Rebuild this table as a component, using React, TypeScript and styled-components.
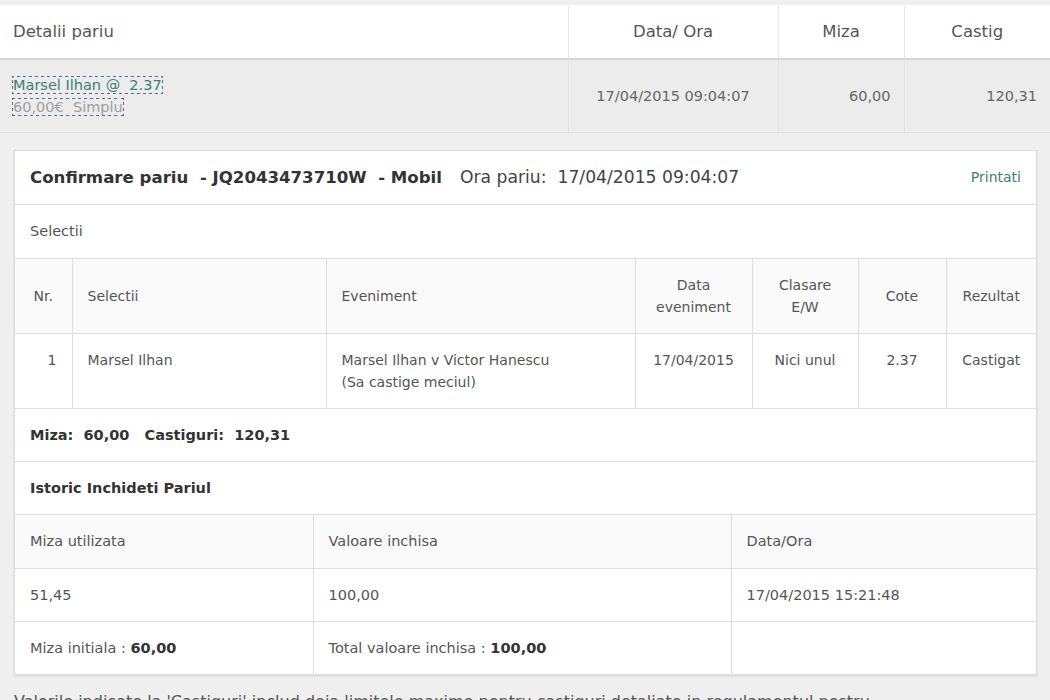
import React from "react"
import styled, { createGlobalStyle } from "styled-components"

const GlobalStyle = createGlobalStyle`
  html, body {
    margin: 0;
    padding: 0;
    background: #efefef;
    font-family: "DejaVu Sans", Verdana, sans-serif;
    color: #555;
  }
  * { box-sizing: border-box; }
`

const Page = styled.div`
  width: 1050px;
  height: 700px;
  overflow: hidden;
  padding-top: 5px;
`

const BetTable = styled.table`
  width: 1050px;
  border-collapse: collapse;
  table-layout: fixed;
`

const HeadCell = styled.th<{ $align?: string }>`
  height: 54px;
  background: #fff;
  font-weight: normal;
  font-size: 16.5px;
  color: #555;
  text-align: ${(p) => p.$align || "center"};
  padding: 0 13px;
  border-bottom: 2px solid #d6d6d6;
  border-left: 1px solid #e6e6e6;
  &:first-child { border-left: none; }
`

const BodyCell = styled.td<{ $align?: string }>`
  height: 73px;
  background: #ececec;
  font-size: 14.5px;
  color: #666;
  text-align: ${(p) => p.$align || "center"};
  padding: 0 13px;
  border-left: 1px solid #e2e2e2;
  border-bottom: 1px solid #e2e2e2;
  &:first-child { border-left: none; }
`

const BetLink = styled.a`
  display: inline;
  outline: 1px dotted #5a6a8a;
  line-height: 22px;
  font-size: 14.5px;
  text-decoration: none;
  white-space: pre;
`

const Odds = styled.span`
  color: #3e8070;
`

const Stake = styled.span`
  color: #a0a0a0;
`

const Content = styled.div`
  padding: 17px 13px 0 14px;
`

const Card = styled.div`
  background: #fff;
  border: 1px solid #dcdcdc;
  box-shadow: 0 1px 2px rgba(0, 0, 0, 0.12);
`

const Row = styled.div<{ $bold?: boolean; $h?: number }>`
  display: flex;
  align-items: center;
  height: ${(p) => p.$h || 53}px;
  padding: 0 15px;
  border-bottom: 1px solid #dedede;
  font-size: 14.5px;
  font-weight: ${(p) => (p.$bold ? "bold" : "normal")};
  color: ${(p) => (p.$bold ? "#333" : "#555")};
`

const Title = styled.span`
  font-size: 16.6px;
  font-weight: bold;
  color: #333;
  white-space: pre;
`

const TitleTime = styled.span`
  font-size: 17.2px;
  color: #444;
  margin-left: 18px;
  white-space: pre;
`

const PrintLink = styled.a`
  margin-left: auto;
  font-size: 14px;
  color: #3e8070;
  text-decoration: none;
`

const Spaced = styled.span`
  white-space: pre;
`

const Grid = styled.table`
  width: 100%;
  border-collapse: collapse;
  table-layout: fixed;
`

const GH = styled.th<{ $align?: string; $w?: number }>`
  width: ${(p) => (p.$w ? p.$w + "px" : "auto")};
  height: 75px;
  background: #fafafa;
  font-weight: normal;
  font-size: 14px;
  line-height: 22px;
  color: #555;
  text-align: ${(p) => p.$align || "center"};
  padding: 0 15px;
  border-left: 1px solid #dedede;
  border-bottom: 1px solid #dedede;
  &:first-child { border-left: none; }
`

const GD = styled.td<{ $align?: string }>`
  height: 75px;
  vertical-align: top;
  padding: 15px 15px 0;
  font-size: 14px;
  line-height: 22px;
  color: #555;
  text-align: ${(p) => p.$align || "center"};
  border-left: 1px solid #dedede;
  border-bottom: 1px solid #dedede;
  &:first-child { border-left: none; }
`

const HH = styled.td<{ $w?: number; $shade?: boolean }>`
  width: ${(p) => (p.$w ? p.$w + "px" : "auto")};
  height: 53px;
  padding: 0 15px;
  font-size: 14.5px;
  color: #555;
  background: ${(p) => (p.$shade ? "#fafafa" : "#fff")};
  border-left: 1px solid #dedede;
  border-bottom: 1px solid #dedede;
  &:first-child { border-left: none; }
  tr:last-child > & { border-bottom: none; }
  b { color: #333; }
`

const Note = styled.p`
  margin: 17px 0 0;
  font-size: 16px;
  color: #555;
  white-space: nowrap;
`

export default function App() {
  return (
    <Page>
      <GlobalStyle />
      <BetTable>
        <colgroup>
          <col style={{ width: 568 }} />
          <col style={{ width: 210 }} />
          <col style={{ width: 126 }} />
          <col style={{ width: 146 }} />
        </colgroup>
        <thead>
          <tr>
            <HeadCell $align="left">Detalii pariu</HeadCell>
            <HeadCell>Data/ Ora</HeadCell>
            <HeadCell>Miza</HeadCell>
            <HeadCell>Castig</HeadCell>
          </tr>
        </thead>
        <tbody>
          <tr>
            <BodyCell $align="left">
              <BetLink href="#">
                <Odds>Marsel Ilhan @  2.37</Odds>
                <br />
                <Stake>60,00€  Simplu</Stake>
              </BetLink>
            </BodyCell>
            <BodyCell>17/04/2015 09:04:07</BodyCell>
            <BodyCell $align="right">60,00</BodyCell>
            <BodyCell $align="right">120,31</BodyCell>
          </tr>
        </tbody>
      </BetTable>

      <Content>
        <Card>
          <Row $h={54}>
            <Title>Confirmare pariu  - JQ2043473710W  - Mobil</Title>
            <TitleTime>Ora pariu:  17/04/2015 09:04:07</TitleTime>
            <PrintLink href="#">Printati</PrintLink>
          </Row>
          <Row $h={54}>Selectii</Row>
          <Grid>
            <thead>
              <tr>
                <GH $w={57}>Nr.</GH>
                <GH $w={254} $align="left">Selectii</GH>
                <GH $w={309} $align="left">Eveniment</GH>
                <GH $w={117}>
                  Data
                  <br />
                  eveniment
                </GH>
                <GH $w={106}>
                  Clasare
                  <br />
                  E/W
                </GH>
                <GH $w={88}>Cote</GH>
                <GH>Rezultat</GH>
              </tr>
            </thead>
            <tbody>
              <tr>
                <GD $align="right">1</GD>
                <GD $align="left">Marsel Ilhan</GD>
                <GD $align="left">
                  Marsel Ilhan v Victor Hanescu
                  <br />
                  (Sa castige meciul)
                </GD>
                <GD>17/04/2015</GD>
                <GD>Nici unul</GD>
                <GD>2.37</GD>
                <GD>Castigat</GD>
              </tr>
            </tbody>
          </Grid>
          <Row $bold>
            <Spaced>Miza:  60,00   Castiguri:  120,31</Spaced>
          </Row>
          <Row $bold>Istoric Inchideti Pariul</Row>
          <Grid>
            <tbody>
              <tr>
                <HH $w={298} $shade>Miza utilizata</HH>
                <HH $w={418} $shade>Valoare inchisa</HH>
                <HH $shade>Data/Ora</HH>
              </tr>
              <tr>
                <HH>51,45</HH>
                <HH>100,00</HH>
                <HH>17/04/2015 15:21:48</HH>
              </tr>
              <tr>
                <HH>
                  Miza initiala : <b>60,00</b>
                </HH>
                <HH>
                  Total valoare inchisa : <b>100,00</b>
                </HH>
                <HH />
              </tr>
            </tbody>
          </Grid>
        </Card>
        <Note>
          Valorile indicate la 'Castiguri' includ deja limitele maxime pentru castiguri detaliate in regulamentul nostru.
        </Note>
      </Content>
    </Page>
  )
}
